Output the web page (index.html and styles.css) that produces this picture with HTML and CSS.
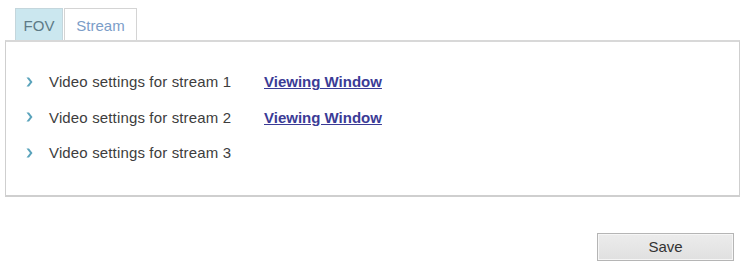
FILE: index.html
```html
<!DOCTYPE html>
<html>
<head>
<meta charset="utf-8">
<link rel="stylesheet" href="styles.css">
</head>
<body>
<div class="page">
  <div class="tabs">
    <div class="tab tab-active">FOV</div>
    <div class="tab">Stream</div>
  </div>
  <div class="panel">
    <div class="row">
      <svg class="arrow" width="7" height="10" viewBox="0 0 7 10"><path d="M0.5 0.5 L3 0.5 L6.5 5 L3 9.5 L0.5 9.5 L4 5 Z" fill="#5aa3bb"/></svg>
      <span class="label">Video settings for stream 1</span>
      <a class="link" href="#">Viewing Window</a>
    </div>
    <div class="row">
      <svg class="arrow" width="7" height="10" viewBox="0 0 7 10"><path d="M0.5 0.5 L3 0.5 L6.5 5 L3 9.5 L0.5 9.5 L4 5 Z" fill="#5aa3bb"/></svg>
      <span class="label">Video settings for stream 2</span>
      <a class="link" href="#">Viewing Window</a>
    </div>
    <div class="row">
      <svg class="arrow" width="7" height="10" viewBox="0 0 7 10"><path d="M0.5 0.5 L3 0.5 L6.5 5 L3 9.5 L0.5 9.5 L4 5 Z" fill="#5aa3bb"/></svg>
      <span class="label">Video settings for stream 3</span>
    </div>
  </div>
  <div class="actions">
    <button class="save">Save</button>
  </div>
</div>
</body>
</html>
```
FILE: styles.css
```css
html, body {
  margin: 0;
  padding: 0;
  background: #ffffff;
}
.page {
  font-family: "Liberation Sans", Arial, sans-serif;
  font-size: 15px;
  color: #3a3a3a;
  padding: 8px 2px 0 5px;
  width: 735px;
}
.tabs {
  display: flex;
  gap: 1px;
  margin-left: 10px;
  height: 32px;
}
.tab {
  box-sizing: border-box;
  height: 32px;
  width: 73px;
  border: 1px solid #d4d4d4;
  border-bottom: none;
  color: #7b9dc8;
  display: flex;
  align-items: center;
  justify-content: center;
  padding-top: 2px;
  background: #ffffff;
}
.tab-active {
  width: 48px;
  background: #cbe7ef;
  color: #5d7a86;
  border-color: #c4d6dc;
}
.panel {
  box-sizing: border-box;
  width: 735px;
  border: 1px solid #cfcfcf;
  border-top: 2px solid #d8d8d8;
  border-bottom: 2px solid #cfcfcf;
  padding: 22px 0 24px 0;
  display: flex;
  flex-direction: column;
}
.row {
  display: flex;
  align-items: center;
  height: 35.5px;
}
.arrow {
  margin-left: 20px;
  width: 7px;
  height: 10px;
  flex: none;
}
.label {
  margin-left: 16px;
  width: 215px;
  letter-spacing: 0.15px;
  color: #3d3d3d;
}
.link {
  color: #3b3b96;
  font-weight: bold;
  text-decoration: underline;
}
.actions {
  display: flex;
  justify-content: flex-end;
  margin-top: 36px;
  padding-right: 6px;
}
.save {
  box-sizing: border-box;
  width: 137px;
  height: 28px;
  font-family: "Liberation Sans", Arial, sans-serif;
  font-size: 15px;
  color: #333333;
  background: linear-gradient(#ececec, #e0e0e0);
  border: 1px solid #b5b5b5;
  box-shadow: inset 0 0 0 1px #f6f6f6;
  border-radius: 0;
  padding: 0;
}
```
